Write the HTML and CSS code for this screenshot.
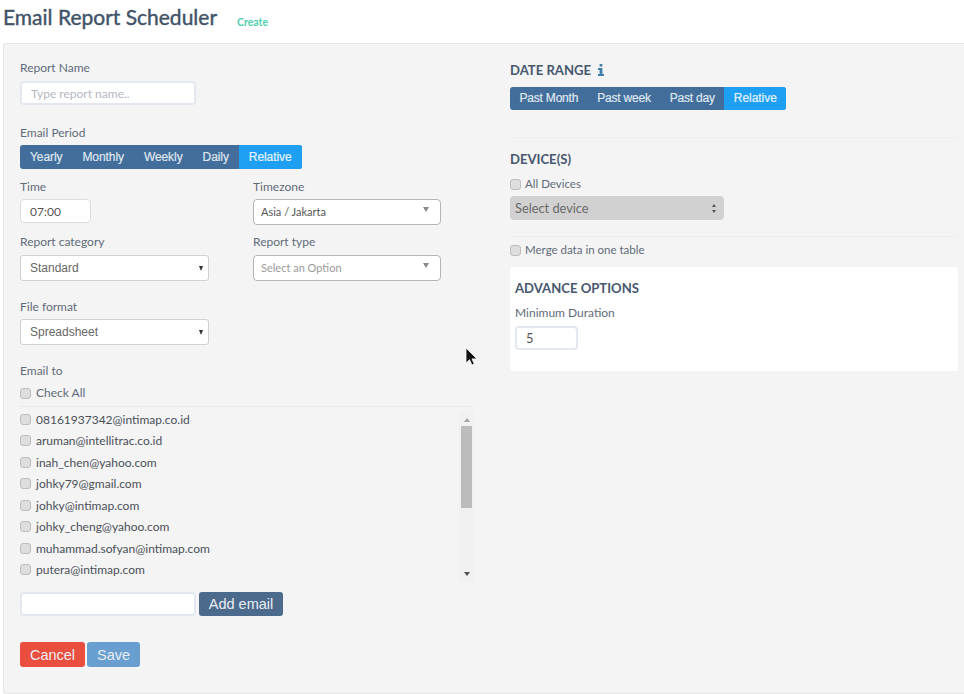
FILE: index.html
```html
<!DOCTYPE html>
<html lang="en">
<head>
<meta charset="utf-8">
<title>Email Report Scheduler</title>
<link rel="stylesheet" href="styles.css">
</head>
<body>
<header class="page-head">
  <h1>Email Report Scheduler</h1>
  <a class="create">Create</a>
</header>
<main class="panel">
  <section class="col-left">
    <label class="lbl lbl-first">Report Name</label>
    <input class="text name-input" placeholder="Type report name..">
    <label class="lbl lbl-period">Email Period</label>
    <div class="btn-group">
      <span>Yearly</span><span>Monthly</span><span>Weekly</span><span>Daily</span><span class="on">Relative</span>
    </div>
    <div class="form-grid">
      <div class="cell cell-time">
        <label class="lbl">Time</label>
        <input class="text time-input" value="07:00">
      </div>
      <div class="cell cell-time">
        <label class="lbl">Timezone</label>
        <div class="chosen"><span>Asia / Jakarta</span><i class="tri-soft"></i></div>
      </div>
      <div class="cell cell-cat">
        <label class="lbl">Report category</label>
        <div class="sel"><span>Standard</span><i class="tri"></i></div>
      </div>
      <div class="cell cell-cat">
        <label class="lbl">Report type</label>
        <div class="chosen muted"><span>Select an Option</span><i class="tri-soft"></i></div>
      </div>
      <div class="cell cell-file">
        <label class="lbl">File format</label>
        <div class="sel"><span>Spreadsheet</span><i class="tri"></i></div>
      </div>
    </div>
    <label class="lbl lbl-email">Email to</label>
    <label class="check check-all"><input type="checkbox"><span>Check All</span></label>
    <div class="list-wrap">
      <ul class="emails">
        <li><label class="check"><input type="checkbox"><span>08161937342@intimap.co.id</span></label></li>
        <li><label class="check"><input type="checkbox"><span>aruman@intellitrac.co.id</span></label></li>
        <li><label class="check"><input type="checkbox"><span>inah_chen@yahoo.com</span></label></li>
        <li><label class="check"><input type="checkbox"><span>johky79@gmail.com</span></label></li>
        <li><label class="check"><input type="checkbox"><span>johky@intimap.com</span></label></li>
        <li><label class="check"><input type="checkbox"><span>johky_cheng@yahoo.com</span></label></li>
        <li><label class="check"><input type="checkbox"><span>muhammad.sofyan@intimap.com</span></label></li>
        <li><label class="check"><input type="checkbox"><span>putera@intimap.com</span></label></li>
      </ul>
      <div class="scrollbar">
        <i class="sb-up"></i>
        <div class="sb-thumb"></div>
        <i class="sb-down"></i>
      </div>
    </div>
    <div class="add-row">
      <input class="text name-input">
      <button class="btn btn-add">Add email</button>
    </div>
    <div class="actions">
      <button class="btn btn-cancel">Cancel</button>
      <button class="btn btn-save">Save</button>
    </div>
  </section>
  <section class="col-right">
    <h2 class="h-date">DATE RANGE <svg class="info" viewBox="0 0 8 12" width="8" height="12"><path d="M2.6 0h2.8v2.6H2.6zM1 4h4.4v6H7v2H1v-2h1.6V6H1z" fill="#3f80a8"/></svg></h2>
    <div class="btn-group group-date">
      <span>Past Month</span><span>Past week</span><span>Past day</span><span class="on">Relative</span>
    </div>
    <hr class="rule rule-a">
    <h2 class="h-dev">DEVICE(S)</h2>
    <label class="check check-dev"><input type="checkbox"><span>All Devices</span></label>
    <div class="sel-disabled"><span>Select device</span><i class="updown"></i></div>
    <hr class="rule rule-b">
    <label class="check check-merge"><input type="checkbox"><span>Merge data in one table</span></label>
    <div class="advance">
      <h2>ADVANCE OPTIONS</h2>
      <label class="lbl">Minimum Duration</label>
      <input class="text dur-input" value="5">
    </div>
  </section>
  <svg class="cursor" viewBox="0 0 13 20" width="13" height="20"><path d="M1 1v15l3.6-3.3 2.3 5.3 2.4-1-2.3-5.1H12z" fill="#111" stroke="#fff" stroke-width=".8"/></svg>
</main>
</body>
</html>
```
FILE: styles.css
```css
* { box-sizing: border-box; }
html, body { margin: 0; padding: 0; }
body {
  width: 964px;
  height: 694px;
  overflow: hidden;
  background: #fff;
  font-family: "Lato", "Liberation Sans", sans-serif;
  font-size: 12px;
  color: #5a6474;
}
.page-head {
  height: 43px;
  padding: 4px 0 0 3px;
  display: flex;
  align-items: flex-start;
}
.page-head h1 {
  margin: 0;
  font-size: 21px;
  line-height: 26px;
  font-weight: 400;
  color: #3f5368;
  -webkit-text-stroke: .4px #3f5368;
}
.create {
  margin: 12px 0 0 20px;
  font-size: 10.5px;
  line-height: 12px;
  font-weight: 700;
  color: #4fd0ae;
}
.panel {
  position: relative;
  margin-left: 3px;
  height: 651px;
  display: flex;
  background: #f4f4f4;
  border: 1px solid #e6e6e6;
  border-right: 0;
  border-radius: 3px 0 0 3px;
}
.col-left { width: 453px; margin-left: 16px; }
.col-right { width: 448px; margin-left: 37px; }
.lbl { display: block; font-size: 12px; line-height: 16px; color: #5f6b7a; }
.lbl-first { margin-top: 16px; }
.lbl-period { margin-top: 20px; }
.lbl-email { margin-top: 17px; }
.text {
  display: block;
  height: 24px;
  padding: 0 9px;
  border: 2px solid #e3e8f0;
  border-radius: 4px;
  background: #fff;
  font-family: "Lato", sans-serif;
  font-size: 12px;
  color: #555;
  outline: none;
}
.text::placeholder { color: #b3b8bf; opacity: 1; }
.name-input { width: 176px; margin-top: 5px; }
.time-input { width: 71px; margin-top: 4px; padding: 0 9px; border: 1px solid #dcdcdc; font-size: 12px; }
.btn-group {
  display: inline-flex;
  height: 24px;
  margin-top: 4px;
  border-radius: 3px;
  overflow: hidden;
  background: #436d9a;
  font-family: "Liberation Sans", Arial, sans-serif;
  font-size: 12px;
  line-height: 24px;
  color: #dfe7f0;
  vertical-align: top;
  -webkit-text-stroke: .2px;
}
.btn-group span { padding: 0 10px; letter-spacing: -.08px; }
.btn-group .on { background: #1e9ff2; color: #e4f3fd; }
.form-grid {
  display: grid;
  grid-template-columns: 233px 188px;
}
.cell-time { padding-top: 10px; height: 65px; }
.cell-cat { height: 65px; }
.cell-file { height: 47px; }
.cell-file .sel { margin-top: 4px; }
.chosen, .sel, .sel-disabled {
  display: flex;
  align-items: center;
  justify-content: space-between;
}
.chosen {
  width: 188px;
  height: 26px;
  margin-top: 4px;
  padding: 0 11px 2px 7px;
  background: #fff;
  border: 1px solid #b5b5b5;
  border-radius: 4px;
  font-size: 11px;
  color: #555;
}
.cell-cat .chosen { margin-top: 5px; }
.chosen.muted { color: #9a9a9a; }
.tri-soft {
  width: 0; height: 0;
  margin-top: -4px;
  border-left: 3.5px solid transparent;
  border-right: 3.5px solid transparent;
  border-top: 5px solid #888;
}
.sel {
  width: 189px;
  height: 26px;
  margin-top: 5px;
  padding: 0 5px 0 9px;
  background: #fff;
  border: 1px solid #d0d0d0;
  border-radius: 3px;
  font-family: "Liberation Sans", Arial, sans-serif;
  font-size: 12px;
  color: #666;
}
.tri {
  width: 0; height: 0;
  border-left: 2.5px solid transparent;
  border-right: 2.5px solid transparent;
  border-top: 5px solid #333;
}
.check { display: flex; align-items: center; gap: 5px; font-size: 12px; line-height: 16px; color: #5f6b7a; }
.check input {
  appearance: none;
  width: 11px;
  height: 11px;
  margin: 0;
  background: #dedede;
  border: 1px solid #bdbdbd;
  border-radius: 3px;
}
.check-all { margin-top: 6px; }
.list-wrap {
  position: relative;
  display: flex;
  justify-content: space-between;
  margin-top: 5px;
  padding-top: 4px;
  border-top: 1px solid #e9e9e9;
  width: 453px;
  height: 177px;
}
.emails { list-style: none; margin: 0; padding: 0; flex: 1; }
.emails li { height: 21.43px; }
.emails .check { color: #4a4f57; line-height: 17px; }
.scrollbar {
  width: 15px;
  height: 171px;
  background: #f1f1f1;
  display: flex;
  flex-direction: column;
  align-items: center;
  margin-right: -1px;
}
.sb-up {
  width: 0; height: 0;
  margin: 7px 0 4px;
  border-left: 3.5px solid transparent;
  border-right: 3.5px solid transparent;
  border-bottom: 4px solid #a3a3a3;
}
.sb-thumb { width: 11px; height: 82px; background: #bcbcbc; }
.sb-down {
  width: 0; height: 0;
  margin-top: auto;
  margin-bottom: 6px;
  border-left: 3.5px solid transparent;
  border-right: 3.5px solid transparent;
  border-top: 4px solid #505050;
}
.add-row { display: flex; gap: 3px; margin-top: 9px; }
.add-row .name-input { margin-top: 0; }
.btn {
  height: 24px;
  padding: 0;
  border: 0;
  border-radius: 3px;
  font-family: "Liberation Sans", Arial, sans-serif;
  font-size: 14.5px;
  color: #e9edf2;
}
.btn-add { width: 84px; background: #4c6b8c; }
.actions { display: flex; gap: 2px; margin-top: 26px; }
.actions .btn { height: 25px; }
.btn-cancel { width: 65px; background: #e94e3f; }
.btn-save { width: 53px; background: #689fd0; }
.col-right h2 {
  margin: 0;
  font-size: 13.1px;
  line-height: 16px;
  font-weight: 700;
  color: #46586e;
}
.col-right .h-date { margin-top: 18px; display: flex; align-items: center; gap: 6px; }
.info { display: block; }
.group-date { margin-top: 9px; height: 23px; line-height: 23px; }
.group-date span { padding: 0 9.5px; letter-spacing: -.2px; }
.group-date .on { letter-spacing: -.05px; }
.rule { height: 1px; margin: 0; border: 0; background: #ededed; width: 448px; }
.rule-a { margin-top: 27px; }
.col-right .h-dev { margin-top: 13px; }
.check-dev { margin-top: 9px; }
.col-right .check { font-size: 11.5px; gap: 4px; }
.sel-disabled {
  width: 214px;
  height: 24px;
  margin-top: 4px;
  padding: 0 7px 0 5px;
  border-radius: 4px;
  background: #d1d1d1;
  font-size: 12.8px;
  color: #6a6a6a;
}
.updown { position: relative; width: 5px; height: 9px; display: block; }
.updown::before, .updown::after {
  content: "";
  position: absolute;
  left: 0;
  border-left: 2.5px solid transparent;
  border-right: 2.5px solid transparent;
}
.updown::before { top: 0; border-bottom: 3.5px solid #555; }
.updown::after { bottom: 0; border-top: 3.5px solid #555; }
.rule-b { margin-top: 16px; }
.check-merge { margin-top: 5px; }
.advance {
  width: 448px;
  height: 104px;
  margin-top: 9px;
  padding: 13px 5px 0;
  background: #fff;
  border-radius: 3px;
}
.advance .lbl { margin-top: 9px; }
.dur-input { width: 63px; margin-top: 5px; font-size: 13px; }
.cursor { position: absolute; left: 461px; top: 303px; }
```
